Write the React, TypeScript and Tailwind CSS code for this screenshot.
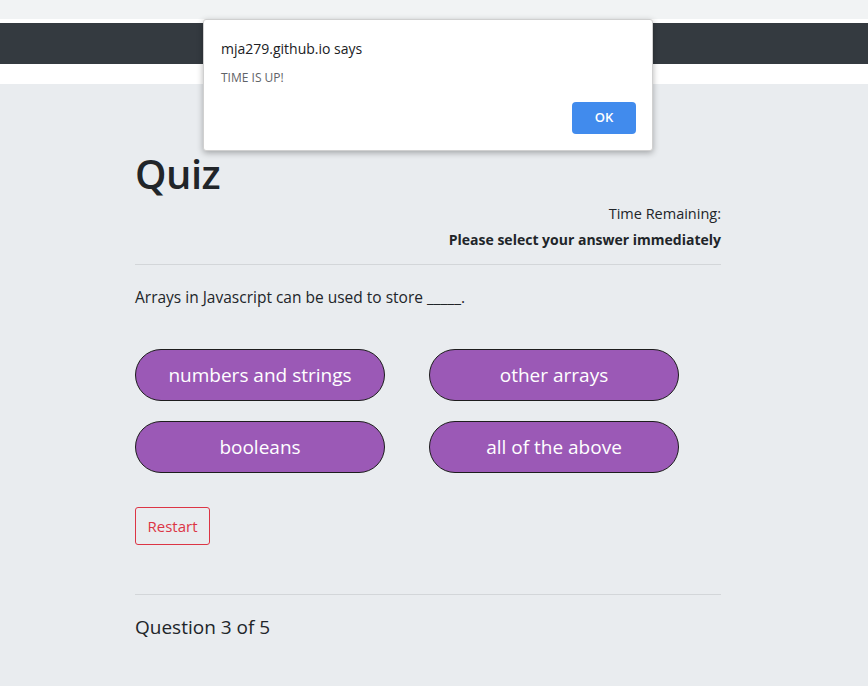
import React from 'react';

const answers = ['numbers and strings', 'other arrays', 'booleans', 'all of the above'];

export default function App() {
  return (
    <div className="relative min-h-[686px] bg-[#e9ecef] text-[#212529] font-['Open_Sans',sans-serif]">
      {/* browser strip + navbar */}
      <div className="h-[19px] bg-[#f1f3f4]" />
      <div className="h-[4px] bg-white" />
      <div className="h-[41px] bg-[#343a40]" />
      <div className="h-[20px] bg-white" />

      <main className="w-[586px] ml-[135px] pt-[66px]">
        <h1 className="text-[40px] leading-[48px] font-semibold tracking-[-0.5px]">Quiz</h1>
        <div className="mt-[3px] text-right leading-[26px]">
          <p className="text-[14.5px]">Time Remaining:</p>
          <p className="text-[14px] font-bold">Please select your answer immediately</p>
        </div>
        <hr className="mt-[11px] border-t border-[#d3d6d9]" />
        <p className="mt-[20px] text-[15.5px] leading-[24px]">Arrays in Javascript can be used to store _____.</p>

        <div className="mt-[40px] grid grid-cols-[250px_250px] gap-x-[44px] gap-y-[20px]">
          {answers.map((a) => (
            <button
              key={a}
              className="h-[52px] rounded-full border border-[#1d1d1d] bg-[#9b59b6] text-white text-[19px]"
            >
              {a}
            </button>
          ))}
        </div>

        <button className="mt-[34px] h-[38px] w-[75px] rounded-[3px] border border-[#dc3545] text-[#dc3545] text-[15px]">
          Restart
        </button>

        <hr className="mt-[49px] border-t border-[#d3d6d9]" />
        <p className="mt-[18px] text-[19px] leading-[28px]">Question 3 of 5</p>
      </main>

      {/* alert dialog */}
      <div className="absolute left-[203px] top-[19px] w-[450px] h-[132px] bg-white border border-[#d0d0d0] rounded-[3px] shadow-[0_2px_6px_rgba(0,0,0,0.3)]">
        <p className="absolute left-[17px] top-[18px] text-[14px] text-[#202124]">mja279.github.io says</p>
        <p className="absolute left-[17px] top-[49px] text-[12px] text-[#5f6368]">TIME IS UP!</p>
        <button className="absolute left-[368px] top-[82px] w-[64px] h-[32px] rounded-[4px] bg-[#418bed] text-white text-[13px] font-semibold">
          OK
        </button>
      </div>
    </div>
  );
}
